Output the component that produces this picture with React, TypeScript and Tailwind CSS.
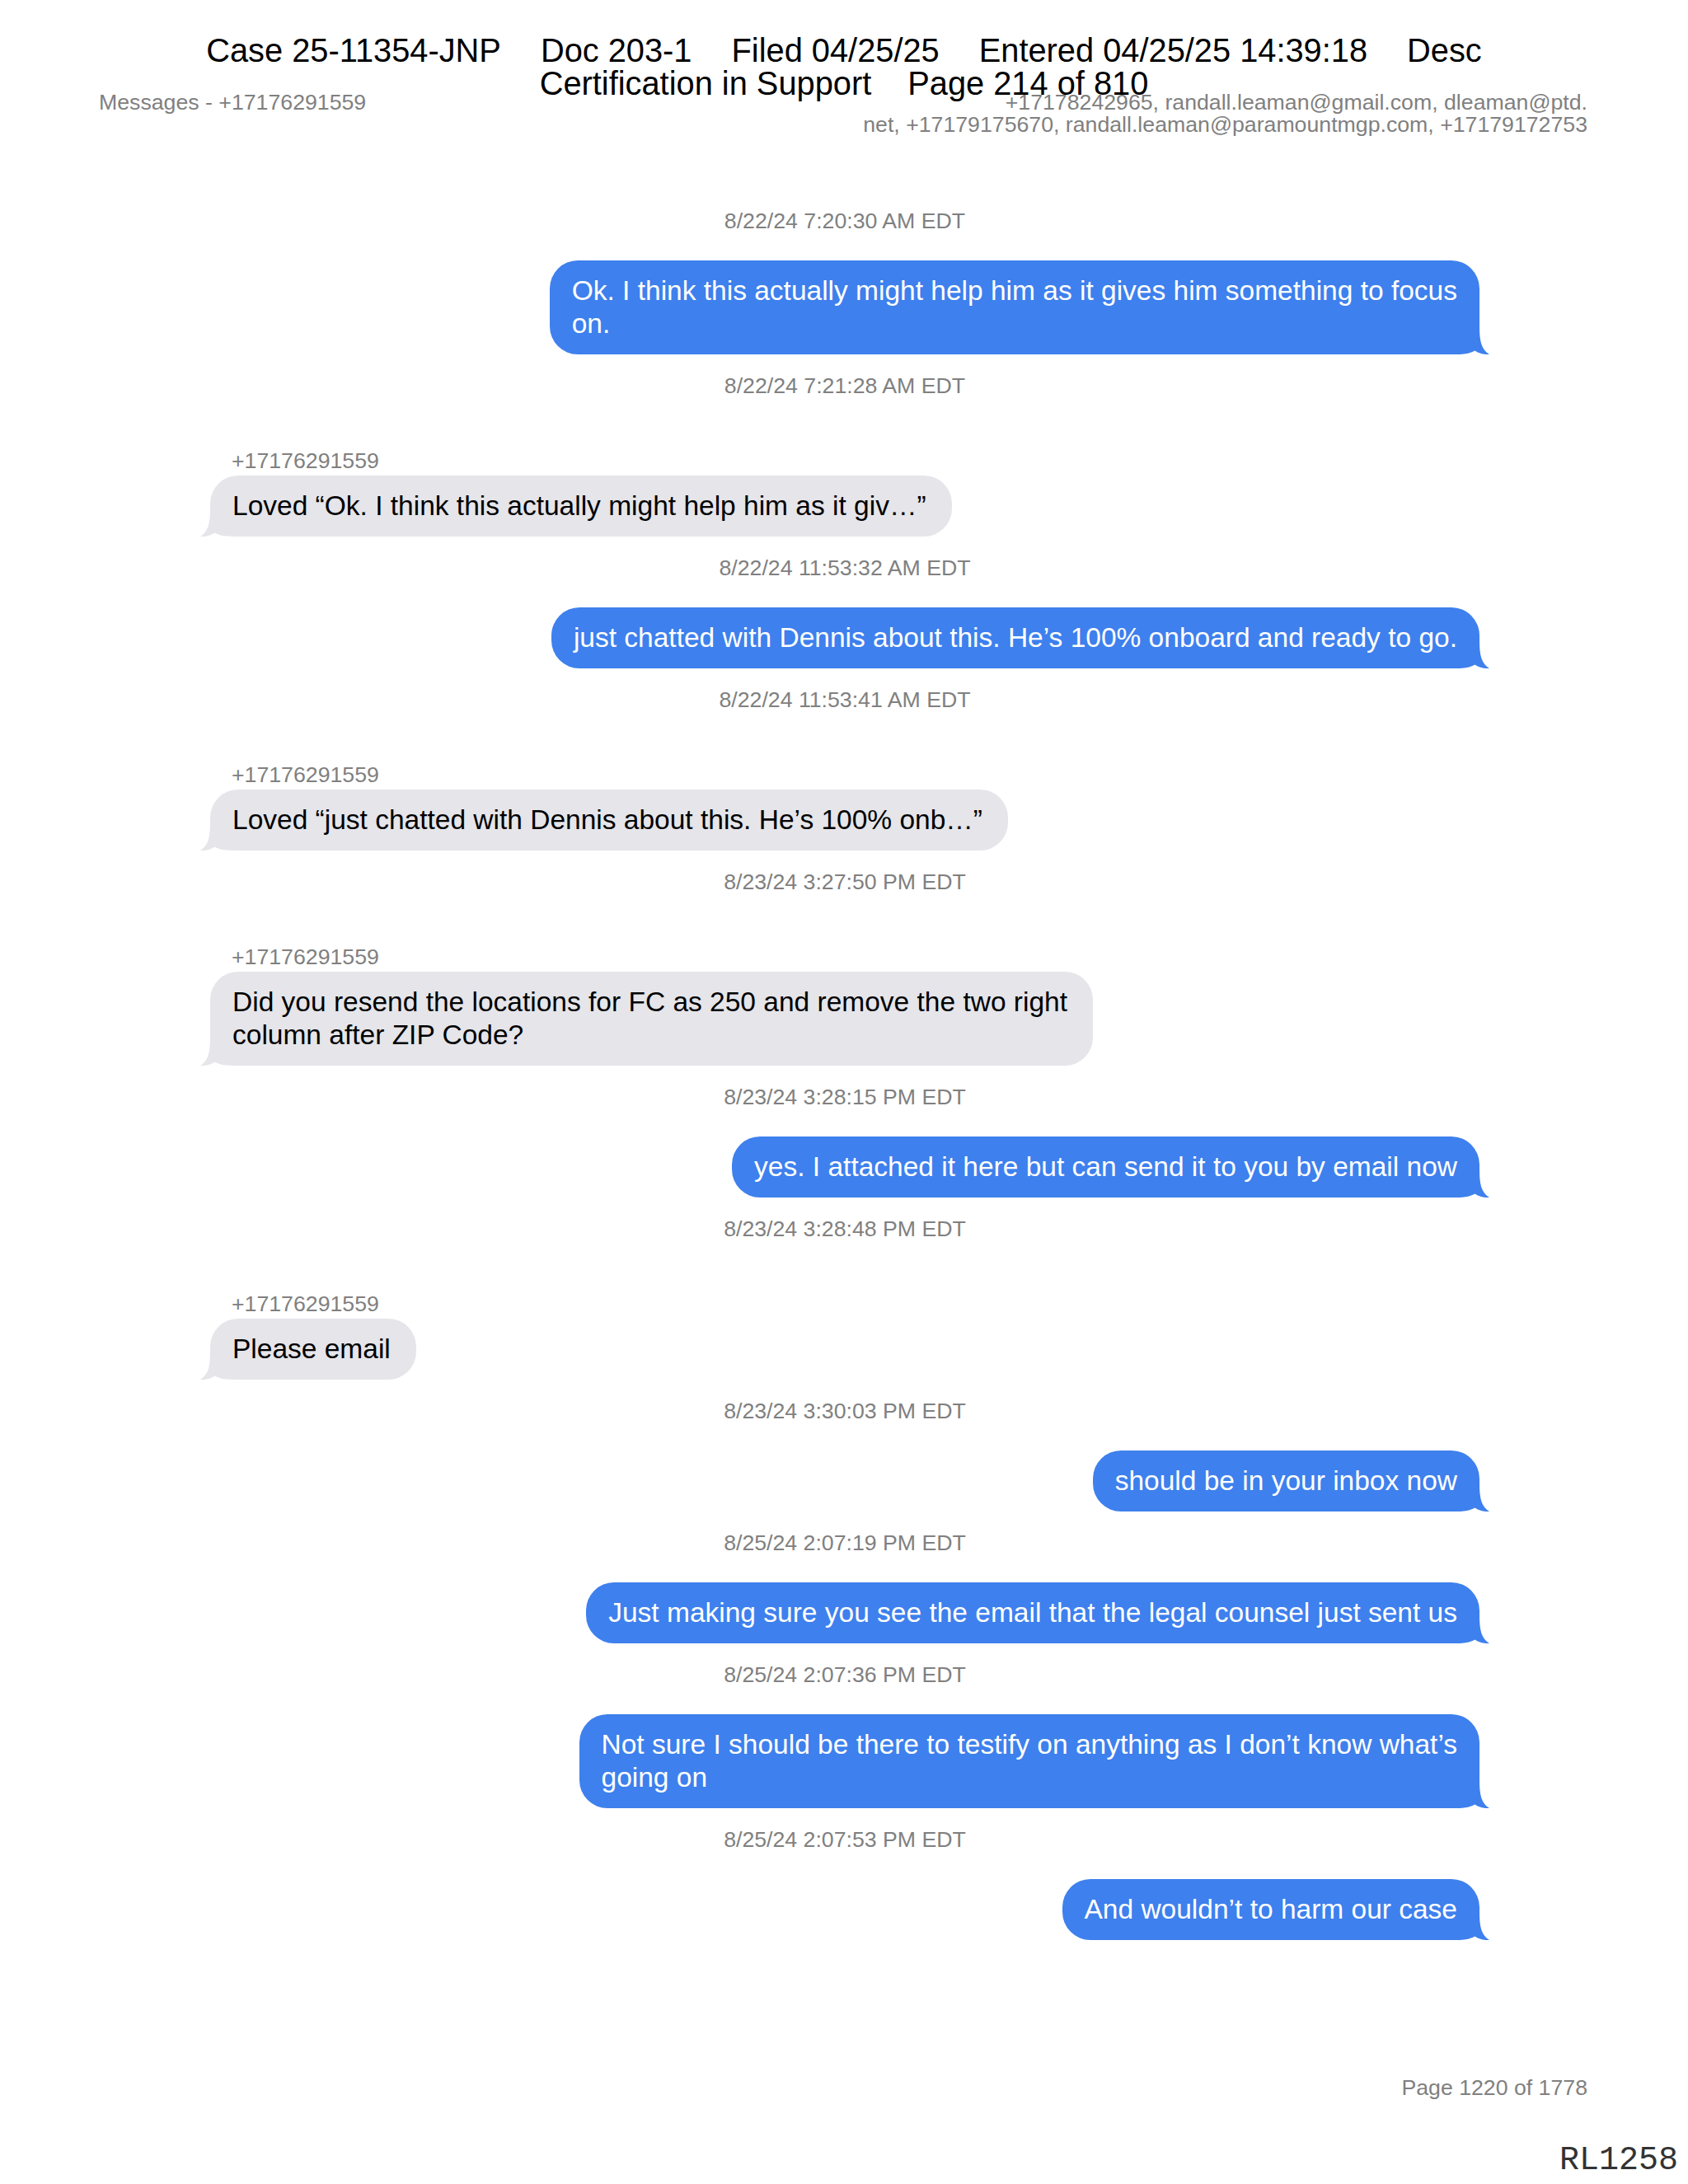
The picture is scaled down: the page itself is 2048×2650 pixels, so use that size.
type Message = {
  time: string;
  from: "me" | "them";
  lines: string[];
};

const SENDER = "+17176291559";

const messages: Message[] = [
  {
    time: "8/22/24 7:20:30 AM EDT",
    from: "me",
    lines: ["Ok. I think this actually might help him as it gives him something to focus", "on."],
  },
  {
    time: "8/22/24 7:21:28 AM EDT",
    from: "them",
    lines: ["Loved \u201cOk. I think this actually might help him as it giv\u2026\u201d"],
  },
  {
    time: "8/22/24 11:53:32 AM EDT",
    from: "me",
    lines: ["just chatted with Dennis about this. He\u2019s 100% onboard and ready to go."],
  },
  {
    time: "8/22/24 11:53:41 AM EDT",
    from: "them",
    lines: ["Loved \u201cjust chatted with Dennis about this. He\u2019s 100% onb\u2026\u201d"],
  },
  {
    time: "8/23/24 3:27:50 PM EDT",
    from: "them",
    lines: ["Did you resend the locations for FC as 250 and remove the two right", "column after ZIP Code?"],
  },
  {
    time: "8/23/24 3:28:15 PM EDT",
    from: "me",
    lines: ["yes. I attached it here but can send it to you by email now"],
  },
  {
    time: "8/23/24 3:28:48 PM EDT",
    from: "them",
    lines: ["Please email"],
  },
  {
    time: "8/23/24 3:30:03 PM EDT",
    from: "me",
    lines: ["should be in your inbox now"],
  },
  {
    time: "8/25/24 2:07:19 PM EDT",
    from: "me",
    lines: ["Just making sure you see the email that the legal counsel just sent us"],
  },
  {
    time: "8/25/24 2:07:36 PM EDT",
    from: "me",
    lines: ["Not sure I should be there to testify on anything as I don\u2019t know what\u2019s", "going on"],
  },
  {
    time: "8/25/24 2:07:53 PM EDT",
    from: "me",
    lines: ["And wouldn\u2019t to harm our case"],
  },
];

function Tail({ mine }: { mine: boolean }) {
  // covers the bottom corner of the bubble and flares out into the tail tip
  return (
    <svg
      viewBox="0 0 47 34"
      className={
        mine
          ? "absolute bottom-0 right-[-13px] w-[47px] h-[34px]"
          : "absolute bottom-0 left-[-13px] w-[47px] h-[34px] -scale-x-100"
      }
    >
      <path
        d="M0 34 L0 0 L34 0 C34 17 36 28 46 34 C40 34.6 33 32.6 28.5 29.5 C22 33.4 14 34 0 34 Z"
        fill={mine ? "#3e80ed" : "#e5e5ea"}
      />
    </svg>
  );
}

function Bubble({ msg }: { msg: Message }) {
  const mine = msg.from === "me";
  return (
    <div
      className={`relative rounded-[34px] px-[27px] py-[17px] text-[33.5px] leading-[40px] ${
        mine ? "self-end bg-[#3e80ed] text-white" : "self-start bg-[#e5e5ea] pr-[31px] text-black"
      }`}
    >
      <div className="relative z-10">
        {msg.lines.map((line, i) => (
          <div key={i} className="whitespace-nowrap">
            {line}
          </div>
        ))}
      </div>
      <Tail mine={mine} />
    </div>
  );
}

export default function App() {
  return (
    <div className="relative w-[2048px] h-[2650px] bg-white flex flex-col font-['Liberation_Sans',Arial,sans-serif]">
      {/* court filing stamp, printed over the page */}
      <div className="absolute inset-x-0 top-[41px] flex flex-col items-center text-[39.8px] leading-[40px] text-black">
        <div className="flex gap-[48px] whitespace-nowrap">
          <span>Case 25-11354-JNP</span>
          <span>Doc 203-1</span>
          <span>Filed 04/25/25</span>
          <span>Entered 04/25/25 14:39:18</span>
          <span>Desc</span>
        </div>
        <div className="flex gap-[44px] whitespace-nowrap">
          <span>Certification in Support</span>
          <span>Page 214 of 810</span>
        </div>
      </div>

      <header className="flex justify-between pl-[120px] pr-[122px] pt-[111px] text-[26.7px] leading-[27px] text-[#808080]">
        <div className="whitespace-nowrap">Messages - +17176291559</div>
        <div className="text-right whitespace-nowrap">
          +17178242965, randall.leaman@gmail.com, dleaman@ptd.
          <br />
          net, +17179175670, randall.leaman@paramountmgp.com, +17179172753
        </div>
      </header>

      <main className="flex flex-col pl-[255px] pr-[253px] pt-[87px]">
        {messages.map((msg, i) => (
          <div key={i} className={`flex flex-col ${i === 0 ? "" : "mt-[22px]"}`}>
            <div className="text-center text-[26.7px] leading-[32px] text-[#808080]">{msg.time}</div>
            {msg.from === "them" ? (
              <>
                <div className="mt-[59px] pl-[26px] text-[26.7px] leading-[32px] text-[#808080]">{SENDER}</div>
                <div className="mt-[2px] flex flex-col">
                  <Bubble msg={msg} />
                </div>
              </>
            ) : (
              <div className="mt-[32px] flex flex-col">
                <Bubble msg={msg} />
              </div>
            )}
          </div>
        ))}
      </main>

      <footer className="mt-auto flex flex-col">
        <div className="pr-[122px] text-right text-[26.7px] leading-[32px] text-[#808080]">Page 1220 of 1778</div>
        <div className="mt-[51px] pb-[6px] pr-[12px] text-right font-['Liberation_Mono','Courier_New',monospace] text-[40px] leading-[44px] text-[#333333]">
          RL1258
        </div>
      </footer>
    </div>
  );
}
